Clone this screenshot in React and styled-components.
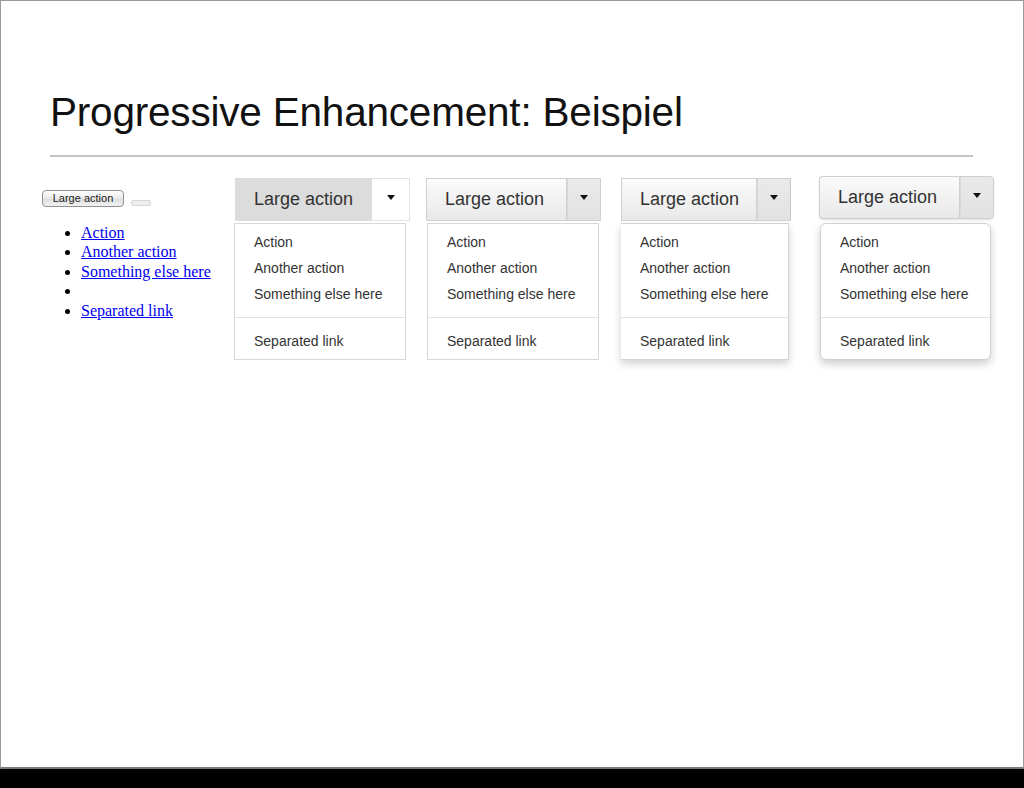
import React from 'react'
import styled, { createGlobalStyle, css } from 'styled-components'

const GlobalStyle = createGlobalStyle`
  html, body {
    margin: 0;
    padding: 0;
    background: #000;
  }
`

const items = ['Action', 'Another action', 'Something else here']

const variants = [
  { kind: 'flat', offset: 0, width: 175, main: 137 },
  { kind: 'gradient', offset: 16, width: 175, main: 140 },
  { kind: 'shadow', offset: 20, width: 170, main: 135 },
  { kind: 'rounded', offset: 28, width: 175, main: 140 }
]

const App = () => {
  return (
    <>
      <GlobalStyle />
      <Slide>
        <Title>Progressive Enhancement: Beispiel</Title>
        <Rule />
        <Demos>
          <Raw>
            <RawButtons>
              <AquaButton>Large action</AquaButton>
              <AquaStub />
            </RawButtons>
            <RawList>
              {items.map((t) => (
                <li key={t}>
                  <a href='#'>{t}</a>
                </li>
              ))}
              <li />
              <li>
                <a href='#'>Separated link</a>
              </li>
            </RawList>
          </Raw>
          {variants.map((v) => (
            <Panel key={v.kind} $offset={v.offset} $width={v.width}>
              <Group $kind={v.kind}>
                <MainButton $kind={v.kind} $width={v.main}>
                  Large action
                </MainButton>
                <CaretButton $kind={v.kind}>
                  <Caret />
                </CaretButton>
              </Group>
              <Menu $kind={v.kind}>
                {items.map((t) => (
                  <MenuItem key={t}>{t}</MenuItem>
                ))}
                <Divider />
                <MenuItem>Separated link</MenuItem>
              </Menu>
            </Panel>
          ))}
        </Demos>
      </Slide>
    </>
  )
}

const Slide = styled.div`
  box-sizing: border-box;
  width: 1024px;
  height: 769px;
  background: #fff;
  border: 1px solid #9a9a9a;
  border-bottom: 2px solid #7a7a7a;
  font-family: 'Liberation Sans', Arial, sans-serif;
  overflow: hidden;
`

const Title = styled.h1`
  margin: 0;
  padding: 83px 0 0 49px;
  font-size: 40.5px;
  font-weight: 400;
  line-height: 56px;
  color: #111;
  letter-spacing: -0.2px;
`

const Rule = styled.div`
  margin: 15px 50px 0 49px;
  height: 2px;
  background: #c4c4c4;
`

const Demos = styled.div`
  display: flex;
  align-items: flex-start;
  padding: 21px 0 0 41px;
`

const Raw = styled.div`
  width: 193px;
  padding-top: 12px;
`

const RawButtons = styled.div`
  display: flex;
  align-items: flex-end;
  gap: 7px;
`

const AquaButton = styled.div`
  box-sizing: border-box;
  width: 82px;
  height: 17px;
  border: 1px solid #8f8f8f;
  border-radius: 4px;
  background: linear-gradient(#ffffff, #e9e9e9 50%, #dcdcdc 51%, #f2f2f2);
  font-size: 11px;
  line-height: 15px;
  text-align: center;
  color: #222;
`

const AquaStub = styled.div`
  width: 18px;
  height: 4px;
  margin-bottom: 1px;
  border: 1px solid #d6d6d6;
  border-radius: 2px;
  background: #eee;
`

const RawList = styled.ul`
  margin: 16px 0 0;
  padding-left: 39px;
  font-family: 'Liberation Serif', 'Times New Roman', serif;
  font-size: 16px;
  line-height: 19.4px;

  a {
    color: #0000ee;
    text-decoration: underline;
  }

  li {
    height: 19.4px;
  }
`

const Panel = styled.div`
  width: ${(p) => p.$width}px;
  margin-left: ${(p) => p.$offset}px;
`

const Group = styled.div`
  display: flex;
  height: 43px;
  ${(p) =>
    p.$kind === 'rounded' &&
    css`
      margin-top: -2px;
      border-radius: 4px;
      box-shadow: 0 1px 2px rgba(0, 0, 0, 0.12);
    `}
`

const MainButton = styled.div`
  box-sizing: border-box;
  width: ${(p) => p.$width}px;
  padding-left: 18px;
  font-size: 18px;
  line-height: 41px;
  color: #333;

  ${(p) =>
    p.$kind === 'flat'
      ? css`
          background: #dcdcdc;
          border: 1px solid #dcdcdc;
        `
      : css`
          background: linear-gradient(#fbfbfb, #e8e8e8);
          border: 1px solid #d0d0d0;
          border-right: none;
        `}

  ${(p) =>
    p.$kind === 'rounded' &&
    css`
      border-radius: 4px 0 0 4px;
      border-color: #cfcfcf;
    `}
`

const CaretButton = styled.div`
  box-sizing: border-box;
  flex: 1;
  display: flex;
  align-items: center;
  justify-content: center;

  ${(p) =>
    p.$kind === 'flat'
      ? css`
          background: #fff;
          border: 1px solid #e2e2e2;
          border-left: none;
        `
      : css`
          background: linear-gradient(#eaeaea, #e1e1e1);
          border: 1px solid #d0d0d0;
          box-shadow: inset 1px 0 0 #d8d8d8;
        `}

  ${(p) =>
    p.$kind === 'shadow' &&
    css`
      border-right-color: #c8c8c8;
    `}

  ${(p) =>
    p.$kind === 'rounded' &&
    css`
      border-radius: 0 4px 4px 0;
      border-color: #cfcfcf;
    `}
`

const Caret = styled.span`
  width: 0;
  height: 0;
  margin-top: -4px;
  border-top: 5px solid #111;
  border-left: 4px solid transparent;
  border-right: 4px solid transparent;
`

const Menu = styled.div`
  box-sizing: border-box;
  margin-top: 2px;
  padding: 5px 0;
  width: ${(p) => (p.$kind === 'shadow' ? 168 : 172)}px;
  border: 1px solid #d8d8d8;
  background: #fff;
  font-size: 14px;
  color: #333;

  ${(p) =>
    p.$kind === 'flat' &&
    css`
      margin-left: -1px;
    `}

  ${(p) =>
    p.$kind === 'gradient' &&
    css`
      margin-left: 1px;
    `}

  ${(p) =>
    p.$kind === 'shadow' &&
    css`
      border-left: none;
      border-color: #d4d4d4;
      box-shadow: 0 4px 8px rgba(0, 0, 0, 0.18);
    `}

  ${(p) =>
    p.$kind === 'rounded' &&
    css`
      margin-top: 4px;
      margin-left: 1px;
      width: 171px;
      border-radius: 6px;
      border-color: #d2d2d2;
      box-shadow: 0 4px 9px rgba(0, 0, 0, 0.2);
    `}
`

const MenuItem = styled.div`
  height: 26px;
  line-height: 26px;
  padding-left: 19px;
  white-space: nowrap;
`

const Divider = styled.div`
  height: 1px;
  margin: 10px 0 10px;
  background: #e3e3e3;
`

export default App
